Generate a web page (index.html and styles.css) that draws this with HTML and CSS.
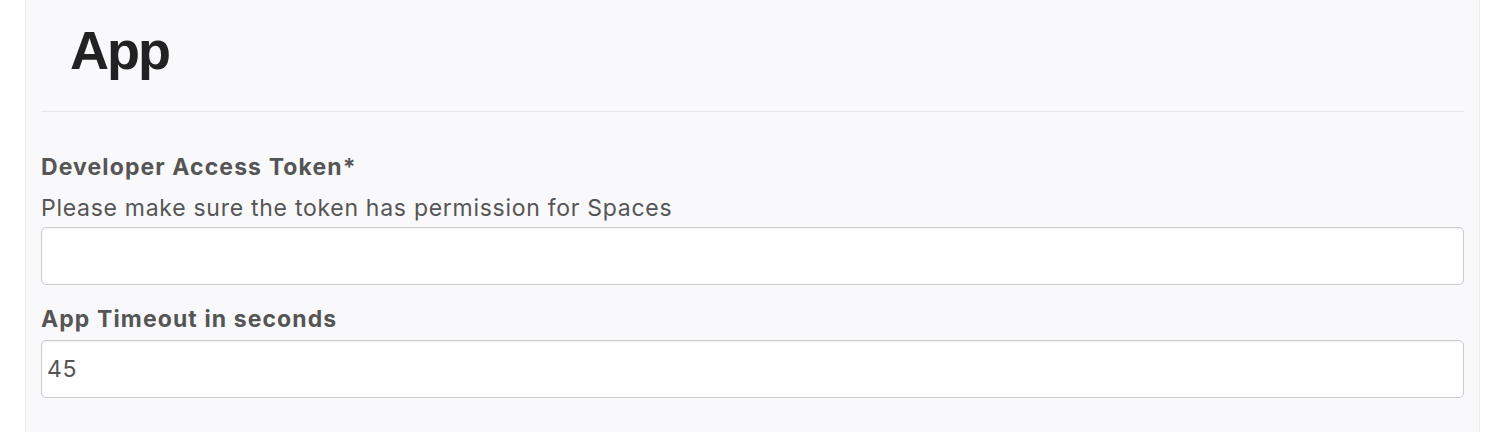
FILE: index.html
```html
<!DOCTYPE html>
<html>
<head>
<meta charset="utf-8">
<link rel="stylesheet" href="styles.css">
</head>
<body>
<div class="panel">
  <h1 class="title">App</h1>
  <hr class="divider">
  <form class="form">
    <label class="label" for="token">Developer Access Token*</label>
    <div class="help">Please make sure the token has permission for Spaces</div>
    <input class="input" id="token" type="text" value="">
    <label class="label label-second" for="timeout">App Timeout in seconds</label>
    <input class="input input-second" id="timeout" type="text" value="45">
  </form>
</div>
</body>
</html>
```
FILE: styles.css
```css
html, body {
  margin: 0;
  padding: 0;
  background: #ffffff;
  height: 100%;
}
body {
  font-family: Inter, "Liberation Sans", Arial, sans-serif;
  overflow: hidden;
}
.panel {
  margin-left: 25px;
  min-height: 100%;
  background: #f9f9fb;
  border-left: 1px solid #ececf0;
  border-right: 1px solid #ececf0;
  padding: 20px 15px 0 15px;
  box-sizing: border-box;
  width: 1455px;
}
.title {
  margin: 0 0 0 29px;
  font-family: "Liberation Sans", Arial, Helvetica, sans-serif;
  font-size: 54px;
  letter-spacing: -2px;
  line-height: 60px;
  font-weight: bold;
  color: #222222;
}
.divider {
  margin: 31px 0 0 0;
  border: 0;
  height: 1px;
  background: #e6e6e8;
}
.form {
  display: flex;
  flex-direction: column;
  padding-top: 42px;
}
.label {
  font-size: 23px;
  line-height: 26px;
  font-weight: bold;
  letter-spacing: 1.1px;
  color: #555555;
}
.help {
  margin-top: 15px;
  font-size: 23px;
  line-height: 26px;
  letter-spacing: 0.72px;
  color: #555555;
}
.input {
  margin-top: 6px;
  height: 58px;
  box-sizing: border-box;
  border: 1px solid #cccccc;
  border-radius: 5px;
  background: #ffffff;
  box-shadow: inset 0 1px 2px rgba(0,0,0,0.06);
  padding: 0 5px;
  font-family: Inter, "Liberation Sans", Arial, sans-serif;
  font-size: 23px;
  letter-spacing: 0.7px;
  color: #555555;
  outline: none;
}
.label-second {
  margin-top: 21px;
}
.input-second {
  margin-top: 8px;
}
```
